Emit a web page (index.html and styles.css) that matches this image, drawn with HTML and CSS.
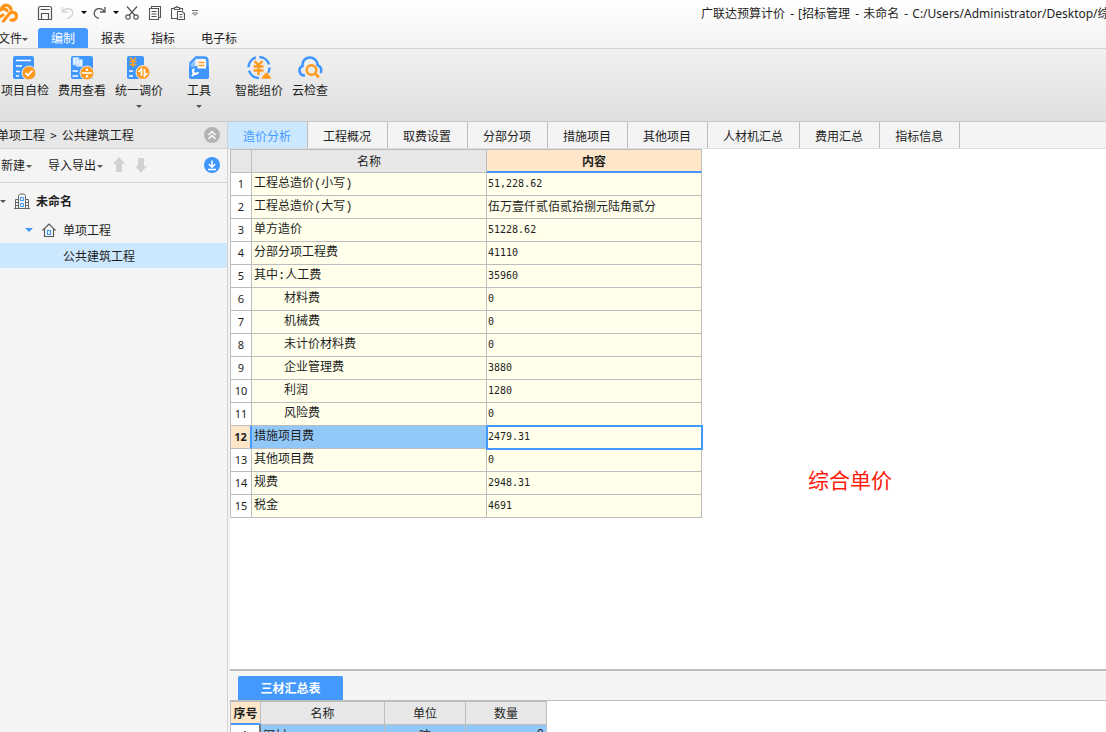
FILE: index.html
```html
<!DOCTYPE html>
<html lang="zh-CN">
<head>
<meta charset="utf-8">
<title>广联达预算计价</title>
<link rel="stylesheet" href="styles.css">
</head>
<body>
<header class="top">
  <div class="titlebar">
    <svg class="logo" width="20" height="20" viewBox="0 0 20 20" fill="none" stroke="#ff9416" stroke-width="3.2" stroke-linecap="round" stroke-linejoin="round"><path d="M-2 9C1 5.500 4.500 5 7 7.500M3.500 18 9.500 10.500C12 8 16.500 9.500 16.500 13S13.500 17.500 11 17M2 4.500C5 .5 10 2 11 6M-2 15 3 12"/></svg>
    <button class="qa" aria-label="保存"><svg width="16" height="16" viewBox="0 0 16 16" fill="none" stroke="#555" stroke-width="1.2"><path d="M1.500 5V14.500H14.500V5M1.500 5V3.500Q1.500 1.500 3.500 1.500H12.500Q14.500 1.500 14.500 3.500V5M3.500 4.500H12.500M4.500 14V8.500H11.500V14"/></svg></button>
    <button class="qa" aria-label="撤销"><svg width="16" height="16" viewBox="0 0 16 16" fill="none" stroke="#d4d4d4" stroke-width="1.3"><path d="M2.500 2V7H7.500M2.500 7C5 3 11 2.500 12.500 6.500S10 12.500 7 14"/></svg></button>
    <button class="qa drop" aria-label="撤销列表"><i class="caret black"></i></button>
    <button class="qa" aria-label="恢复"><svg width="16" height="16" viewBox="0 0 16 16" fill="none" stroke="#555" stroke-width="1.3"><path d="M13 2V7H8M13 7C10 2.500 4 2.500 2.500 6.500S4 12.500 7 13.500"/></svg></button>
    <button class="qa drop" aria-label="恢复列表"><i class="caret black"></i></button>
    <button class="qa" aria-label="剪切"><svg width="16" height="16" viewBox="0 0 16 16" fill="none" stroke="#555" stroke-width="1.2"><path d="M3 1.500 11 10.500M13 1.500 5 10.500"/><circle cx="4" cy="12" r="2.200"/><circle cx="12" cy="12" r="2.200"/></svg></button>
    <button class="qa" aria-label="复制"><svg width="16" height="16" viewBox="0 0 16 16" fill="none" stroke="#555" stroke-width="1.100"><path d="M4.500 3V1.500H13.500V12.500H11.500M2.500 3.500H11.500V14.500H2.500ZM4.500 6.500H9.500M4.500 9H9.500M4.500 11.500H9.500"/></svg></button>
    <button class="qa" aria-label="粘贴"><svg width="16" height="16" viewBox="0 0 16 16" fill="none" stroke="#555" stroke-width="1.100"><path d="M4.500 3.500H1.500V13.500H7M10 3.500H12.500V5.500M4.500 4.500V2.500H6L7 1.500 8 2.500H9.500V4.500ZM7.500 6.500H12L14.500 8.500V14.500H7.500ZM9.500 9.500H12.500M9.500 12H12.500"/></svg></button>
    <button class="qa more" aria-label="自定义"><svg width="8" height="8" viewBox="0 0 8 8" fill="none" stroke="#777"><path d="M1 1.500H7M1.500 4 4 6.500 6.500 4Z"/></svg></button>
    <h1 class="title">广联达预算计价 <span>-</span> [招标管理 <span>-</span> 未命名 <span>-</span> C:/Users/Administrator/Desktop/综</h1>
  </div>
  <nav class="menu">
    <button class="file">文件<i class="caret"></i></button>
    <button class="active">编制</button>
    <button>报表</button>
    <button>指标</button>
    <button>电子标</button>
  </nav>
</header>
<div class="ribbon">
  <div class="group">
    <button class="tool"><svg width="26" height="26" viewBox="0 0 26 26"><rect x="1" y="1" width="21" height="23" rx="2" fill="#3f97fd"/><path d="M4 5.500H19M4 11H10M4 16.500H8M4 21H7" stroke="#fff" stroke-width="1.600"/><circle cx="17" cy="18" r="7" fill="#ff9a1e" stroke="#e4efff"/><path d="M13.500 18 16 20.500 20.500 15.500" fill="none" stroke="#fff" stroke-width="1.800"/></svg>项目自检</button>
    <button class="tool"><svg width="26" height="26" viewBox="0 0 26 26"><rect x="2" y="1" width="22" height="23" rx="2" fill="#3f97fd"/><path d="M4 2.500H10V10H4ZM7 4.500H13.500V11.500H7Z" fill="#e8f3ff" stroke="#9fccff" stroke-width=".7"/><path d="M3.500 16H9M3.500 21H9" stroke="#fff" stroke-width="1.600"/><circle cx="18" cy="18" r="7" fill="#ff9a1e" stroke="#e4efff"/><path d="M13 18H23" stroke="#fff" stroke-width="1.600"/><circle cx="18" cy="14.800" r="1.300" fill="#fff"/><circle cx="18" cy="21.200" r="1.300" fill="#fff"/></svg>费用查看</button>
    <button class="tool"><svg width="26" height="26" viewBox="0 0 26 26"><rect x="1" y="1" width="17" height="23" rx="2" fill="#3f97fd"/><path d="M4 2.500 7 6 10 2.500M7 6V12M3.500 6.500H10.500M3.500 9.500H10.500" fill="none" stroke="#ffa12b" stroke-width="1.700"/><path d="M3 16H7M3 21H7" stroke="#fff" stroke-width="1.600"/><circle cx="17" cy="17.500" r="7" fill="#ff9a1e" stroke="#e4efff"/><path d="M12.500 17 15.500 14V21M18.500 14V21L21.500 18" fill="none" stroke="#fff" stroke-width="1.700"/></svg>统一调价<i class="caret"></i></button>
  </div>
  <div class="group">
    <button class="tool"><svg width="26" height="26" viewBox="0 0 26 26"><rect x="3" y="11" width="20" height="13" rx="2" fill="#3f97fd"/><path d="M4.500 13V8L10 2.500H18Q21.500 2.500 21.500 6V13" fill="none" stroke="#3f97fd" stroke-width="2.400"/><path d="M11.500 5H18L20 7V13.500H11.500Z" fill="#fff"/><path d="M12.500 7.500H18.500M12.500 10.500H18.500" stroke="#ff9a1e" stroke-width="1.600"/><path d="M5 9 9 5V12H5Z" fill="#8fc3ff"/><path d="M6 21 9.500 17.500M8.500 14A2.600 2.600 0 1 0 12 17" fill="none" stroke="#fff" stroke-width="2"/></svg>工具<i class="caret"></i></button>
  </div>
  <div class="group">
    <button class="tool"><svg width="26" height="26" viewBox="0 0 26 26"><circle cx="13" cy="12.500" r="10.500" fill="none" stroke="#3f97fd" stroke-width="2.400" stroke-dasharray="13 3.500"/><path d="M8.500 6 12.500 10 16.500 6M12.500 10V20M7.500 11.500H17.500M7.500 15.500H17.500" fill="none" stroke="#ff9a1e" stroke-width="2.400"/><path d="M15 24 17 20H18A2.500 2.500 0 0 1 23 20H24L25.500 24Z" fill="#ff9a1e" stroke="#f0f0f0" stroke-width=".6"/></svg>智能组价</button>
    <button class="tool"><svg width="26" height="26" viewBox="0 0 26 26"><path d="M8 20.500H6.500A5 5 0 0 1 5.500 11C5 5 9 2.500 13 2.500S20.500 5.500 20.500 10A5.500 5.500 0 0 1 23.500 18" fill="none" stroke="#3f97fd" stroke-width="2.500"/><circle cx="14.500" cy="15" r="4.800" fill="none" stroke="#ff9a1e" stroke-width="2.400"/><path d="M18 18.500 22 22.500" stroke="#ff9a1e" stroke-width="2.600"/></svg>云检查</button>
  </div>
</div>
<div class="work">
  <aside class="side">
    <div class="crumb"><span class="path"><span>单项工程</span><span>&gt;</span><span>公共建筑工程</span></span>
      <button class="round" aria-label="收起"><svg width="16" height="16" viewBox="0 0 16 16"><circle cx="8" cy="8" r="8" fill="#b3b3b3"/><path d="M4.500 8 8 4.500 11.500 8M4.500 12 8 8.500 11.500 12" fill="none" stroke="#fff" stroke-width="1.400"/></svg></button></div>
    <div class="sidebar-tools">
      <button>新建<i class="caret"></i></button>
      <button class="io">导入导出<i class="caret"></i></button>
      <button class="arrow" aria-label="上移"><svg width="12" height="16" viewBox="0 0 12 16"><path d="M6 0 12 7H9V15H3V7H0Z" fill="#d2d2d2"/></svg></button>
      <button class="arrow" aria-label="下移"><svg width="12" height="16" viewBox="0 0 12 16"><path d="M6 16 12 9H9V1H3V9H0Z" fill="#d2d2d2"/></svg></button>
      <button class="round" aria-label="下载"><svg width="16" height="16" viewBox="0 0 16 16"><circle cx="8" cy="8" r="8" fill="#3f97fd"/><path d="M8 3.500V10M4.800 7 8 10.200 11.200 7M4 12.500H12" fill="none" stroke="#fff" stroke-width="1.500"/></svg></button>
    </div>
    <ul class="tree">
      <li class="root"><i class="caret"></i><svg width="16" height="16" viewBox="0 0 16 16" fill="none" stroke="#666"><path d="M0 15.500H16M1.500 15V6.500H4.500M4.500 15V2.500L6 1H10L11.500 2.500V15M11.500 6.500H14.500V15M1.500 9.500H4M1.500 12.500H4M12 9.500H14M12 12.500H14"/><path d="M6.500 4.500H9.500V7.500H6.500ZM6.500 10.500H9.500V13.500H6.500Z" stroke="#3f97fd"/></svg><b>未命名</b></li>
      <li class="unit"><i class="caret blue"></i><svg width="14" height="14" viewBox="0 0 14 14" fill="none" stroke="#555" stroke-width="1.100"><path d="M.5 7.500 7 1 13.500 7.500M2.500 6V13.500H11.500V6"/><path d="M5.500 7.500H8.500V11.500H5.500Z" stroke="#3f97fd"/></svg>单项工程</li>
      <li class="leaf">公共建筑工程</li>
    </ul>
  </aside>
  <main class="main">
    <nav class="tabs">
      <button class="active">造价分析</button><button>工程概况</button><button>取费设置</button><button>分部分项</button><button>措施项目</button><button>其他项目</button><button>人材机汇总</button><button>费用汇总</button><button>指标信息</button>
    </nav>
    <section class="sheet">
      <table class="grid cost">
        <colgroup><col class="c-num"><col class="c-name"><col class="c-value"></colgroup>
        <thead><tr><th></th><th>名称</th><th class="current">内容</th></tr></thead>
        <tbody>
          <tr><th>1</th><td>工程总造价(小写)</td><td>51,228.62</td></tr>
          <tr><th>2</th><td>工程总造价(大写)</td><td class="words">伍万壹仟贰佰贰拾捌元陆角贰分</td></tr>
          <tr><th>3</th><td>单方造价</td><td>51228.62</td></tr>
          <tr><th>4</th><td>分部分项工程费</td><td>41110</td></tr>
          <tr><th>5</th><td>其中:人工费</td><td>35960</td></tr>
          <tr><th>6</th><td class="sub">材料费</td><td>0</td></tr>
          <tr><th>7</th><td class="sub">机械费</td><td>0</td></tr>
          <tr><th>8</th><td class="sub">未计价材料费</td><td>0</td></tr>
          <tr><th>9</th><td class="sub">企业管理费</td><td>3880</td></tr>
          <tr><th>10</th><td class="sub">利润</td><td>1280</td></tr>
          <tr><th>11</th><td class="sub">风险费</td><td>0</td></tr>
          <tr class="selected"><th>12</th><td>措施项目费</td><td>2479.31</td></tr>
          <tr><th>13</th><td>其他项目费</td><td>0</td></tr>
          <tr><th>14</th><td>规费</td><td>2948.31</td></tr>
          <tr><th>15</th><td>税金</td><td>4691</td></tr>
        </tbody>
      </table>
      <p class="note">综合单价</p>
    </section>
    <section class="bottom">
      <div class="bottom-tabs"><button>三材汇总表</button></div>
      <table class="grid materials">
        <colgroup><col class="c-index"><col class="c-material"><col class="c-unit"><col class="c-unit"></colgroup>
        <thead><tr><th class="current">序号</th><th>名称</th><th>单位</th><th>数量</th></tr></thead>
        <tbody><tr><th>1</th><td>钢材</td><td class="center">吨</td><td class="right">0</td></tr></tbody>
      </table>
    </section>
  </main>
</div>
</body>
</html>
```
FILE: styles.css
```css
* { box-sizing: border-box; }
body {
  margin: 0;
  height: 100vh;
  overflow: hidden;
  display: flex;
  flex-direction: column;
  font: 12px/16px "Noto Sans CJK SC", sans-serif;
  color: #1e1e1e;
  background: #fff;
}
button {
  margin: 0;
  padding: 0;
  border: 0;
  background: none;
  font: inherit;
  color: inherit;
  white-space: nowrap;
}
svg { display: block; flex: none; }
.caret {
  display: inline-block;
  flex: none;
  border: 3px solid transparent;
  border-top-color: #555;
  border-bottom: 0;
}
.caret.black { border-top-color: #000; }
.caret.blue { border-width: 4px 4px 0; border-top-color: #3f97fd; }

.top {
  flex: none;
  background: linear-gradient(#fff, #f3f3f3);
  border-bottom: 1px solid #d4d4d4;
}
.titlebar { display: flex; align-items: center; height: 28px; padding-bottom: 3px; }
.logo { margin-right: 13px; }
.qa { width: 23px; height: 20px; display: flex; align-items: center; justify-content: center; }
.qa.drop { width: 9px; }
.qa.more { width: 12px; }
.title {
  flex: 0 0 405px;
  margin: 3px 0 0 auto;
  overflow: hidden;
  white-space: nowrap;
  font: 12px/18px "Noto Sans", "Noto Sans CJK SC", sans-serif;
}
.title span { margin: 0 1px 0 2px; }
.menu { display: flex; height: 20px; }
.menu button { padding: 0 13px; }
.menu .file { width: 38px; margin-left: -2px; margin-right: 2px; padding: 0; text-align: left; }
.file .caret { vertical-align: 2px; }
.menu .active { background: #4499ff; color: #fff; border-radius: 3px 3px 0 0; }

.ribbon {
  flex: none;
  display: flex;
  gap: 17px;
  height: 73px;
  margin-left: -2px;
  padding-top: 6px;
  background: linear-gradient(#f1f1f1, #dfdfdf);
  border-bottom: 1px solid #c8c8c8;
}
.group { display: flex; gap: 3px; }
.tool { display: flex; flex-direction: column; align-items: center; justify-content: flex-start; padding: 0 3px; }
.tool svg { margin-bottom: 1px; }
.tool .caret { margin-top: 7px; }

.work { flex: 1; min-height: 0; display: flex; }
.side { flex: 0 0 228px; background: #f4f4f4; border-right: 1px solid #d2d2d2; }
.crumb {
  display: flex;
  align-items: center;
  justify-content: space-between;
  height: 27px;
  padding-right: 7px;
  background: #e7e7e7;
  border-bottom: 1px solid #d6d6d6;
}
.path { display: flex; gap: 5px; margin-left: -3px; }
.sidebar-tools {
  display: flex;
  align-items: center;
  height: 34px;
  padding: 0 7px 2px 1px;
  border-bottom: 1px solid #d4d4d4;
}
.sidebar-tools .caret { vertical-align: 2px; margin-left: 1px; }
.io { margin-left: 16px; }
.arrow { margin-left: 10px; }
.sidebar-tools .round { margin-left: auto; }
.tree { list-style: none; margin: 0; padding: 3px 0 0; }
.tree li { display: flex; align-items: center; height: 25px; }
.tree .root { height: 30px; }
.root svg { margin: 0 6px 0 8px; }
.tree .unit { height: 27px; padding-left: 25px; }
.unit svg { margin: 0 7px 0 9px; }
.tree .leaf { padding-left: 63px; background: #cce8ff; }

.main { flex: 1; min-width: 0; display: flex; flex-direction: column; }
.tabs { display: flex; flex: none; height: 27px; background: #f4f4f4; border-bottom: 1px solid #dcdcdc; }
.tabs button { padding: 2px 16px 0 15px; border-right: 1px solid #bebebe; }
.tabs .active { background: #cce8ff; color: #4499ff; }
.sheet { position: relative; flex: 1; min-height: 0; border-left: 2px solid #f4f4f4; }
.grid {
  table-layout: fixed;
  border-collapse: separate;
  border-spacing: 0;
  border: solid #bdbdbd;
  border-width: 1px 0 0 1px;
}
.grid th, .grid td {
  height: 23px;
  padding: 0 2px;
  border: solid #bdbdbd;
  border-width: 0 1px 1px 0;
  line-height: 16px;
  font-weight: 400;
  white-space: nowrap;
}
.grid thead th { background: #e7e7e7; padding: 0; }
.grid thead .current { background: #ffe6c8; border-bottom: 2px solid #4499ff; font-weight: 700; }
.grid tbody th { background: #fff; padding: 0; font: 11px/16px "Noto Sans", sans-serif; }
.grid td { background: #ffffeb; font-family: "Liberation Mono", "Noto Sans CJK SC", monospace; }
.cost { width: 472px; }
.cost td:last-child { font-family: "DejaVu Sans Mono", "Noto Sans CJK SC", monospace; font-size: 10px; padding-left: 1px; }
.cost td.words { font-size: 12px; }
.cost td.sub { padding-left: 32px; }
.c-num { width: 21px; }
.c-name { width: 235px; }
.c-value { width: 215px; }
.cost .selected th { background: #ffe6c8; font-weight: 700; border-right: 2px solid #4499ff; }
.cost .selected td { background: #92c8f7; }
.cost .selected td:last-child { background: #ffffeb; outline: 2px solid #4499ff; outline-offset: -1px; }
.note {
  position: absolute;
  left: 578px;
  top: 315px;
  margin: 0;
  font-size: 21px;
  line-height: 30px;
  color: #ff1a0c;
}

.bottom { flex: 0 0 63px; overflow: hidden; border-left: 2px solid #f4f4f4; }
.bottom-tabs {
  display: flex;
  align-items: flex-end;
  height: 32px;
  padding-left: 8px;
  background: #f4f4f4;
  border-top: 2px solid #bdbdbd;
  border-bottom: 1px solid #bdbdbd;
}
.bottom-tabs button {
  width: 105px;
  height: 24px;
  background: #4499ff;
  color: #fff;
  font-weight: 700;
  border-radius: 2px 2px 0 0;
}
.materials { width: 317px; }
.materials td { background: #92c8f7; padding-top: 2px; }
.materials tbody th { border-right: 2px solid #777; }
.materials tbody th, .materials .right { padding: 0 2px 2px; }
.c-index { width: 30px; }
.c-material { width: 124px; }
.c-unit { width: 81px; }
.grid .center { text-align: center; }
.grid .right { text-align: right; }
```
